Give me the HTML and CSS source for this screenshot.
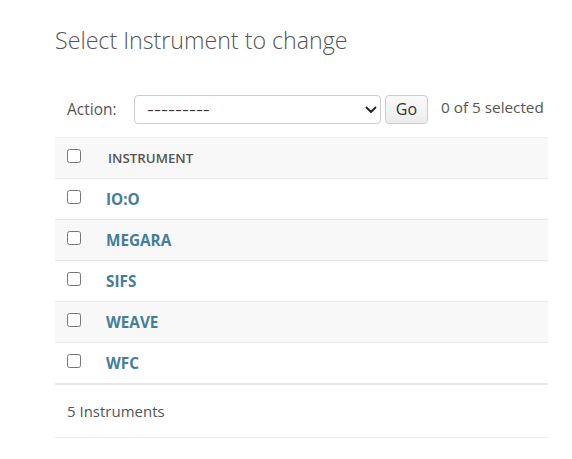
FILE: index.html
```html
<!DOCTYPE html>
<html>
<head>
<meta charset="utf-8">
<link rel="stylesheet" href="styles.css">
</head>
<body>
<div class="content">
  <h1 class="title">Select Instrument to change</h1>
  <div class="actions">
    <span class="action-label">Action:</span>
    <div class="select">
      <span class="select-text">---------</span>
      <svg class="chev" width="12" height="8" viewBox="0 0 12 8"><path d="M1.5 1.5 L6 6 L10.5 1.5" fill="none" stroke="#222" stroke-width="1.8" stroke-linecap="round" stroke-linejoin="round"/></svg>
    </div>
    <button class="go">Go</button>
    <span class="counter">0 of 5 selected</span>
  </div>
  <div class="table">
    <div class="row head">
      <span class="cb-cell"><input type="checkbox"></span>
      <span class="col-title">INSTRUMENT</span>
    </div>
    <div class="row"><span class="cb-cell"><input type="checkbox"></span><a class="link">IO:O</a></div>
    <div class="row alt"><span class="cb-cell"><input type="checkbox"></span><a class="link">MEGARA</a></div>
    <div class="row"><span class="cb-cell"><input type="checkbox"></span><a class="link">SIFS</a></div>
    <div class="row alt"><span class="cb-cell"><input type="checkbox"></span><a class="link">WEAVE</a></div>
    <div class="row last"><span class="cb-cell"><input type="checkbox"></span><a class="link">WFC</a></div>
  </div>
  <div class="footer">5 Instruments</div>
</div>
</body>
</html>
```
FILE: styles.css
```css
html, body {
  margin: 0;
  padding: 0;
  background: #fff;
}
body {
  font-family: "Open Sans", "Noto Sans", sans-serif;
  color: #333;
}
.content {
  margin-left: 55px;
  width: 493px;
  padding-top: 22px;
}
.title {
  margin: 0;
  font-size: 23.2px;
  font-weight: 300;
  color: #555;
  line-height: 36px;
}
.actions {
  display: flex;
  align-items: center;
  margin-top: 36px;
  height: 30px;
  padding-left: 12px;
  font-size: 15px;
  color: #555;
}
.action-label {
  width: 67px;
  font-size: 15.5px;
}
.select {
  box-sizing: border-box;
  width: 247px;
  height: 29px;
  border: 1px solid #ccc;
  border-radius: 4px;
  display: flex;
  align-items: center;
  justify-content: space-between;
  padding: 0 3px 0 12px;
  color: #333;
  font-size: 14px;
}
.select-text {
  display: inline-block;
  transform: scaleX(1.55);
  transform-origin: left center;
}
.chev { margin-top: 1px; }
.go {
  box-sizing: border-box;
  margin-left: 4px;
  width: 43px;
  height: 29px;
  border: 1px solid #ccc;
  border-radius: 4px;
  background: linear-gradient(#fafafa, #ececec);
  font-family: inherit;
  font-size: 16px;
  color: #333;
  padding: 0;
}
.counter {
  margin-left: 13px;
  color: #555;
  font-size: 15.3px;
  position: relative;
  top: -2px;
}
.table {
  margin-top: 13px;
  border-top: 1px solid #eee;
}
.row {
  display: flex;
  align-items: center;
  height: 40px;
  border-bottom: 1px solid #e8e8e8;
}
.row.alt { background: #f8f8f8; }
.row.head { background: #f8f8f8; }
.row.last { border-bottom: 2px solid #e8e8e8; }
.cb-cell {
  width: 51px;
  padding-left: 11px;
  box-sizing: border-box;
  display: flex;
  align-items: center;
  height: 100%;
}
.cb-cell input {
  margin: -4px 0 0 1px;
  width: 14px;
  height: 14px;
}
.col-title {
  font-size: 13.3px;
  font-weight: 600;
  color: #555;
  margin-left: 2px;
}
.link {
  color: #447e9b;
  font-weight: 700;
  font-size: 15.3px;
}
.footer {
  height: 52px;
  line-height: 52px;
  padding-left: 12px;
  font-size: 15px;
  color: #555;
  border-bottom: 1px solid #eee;
}
```
